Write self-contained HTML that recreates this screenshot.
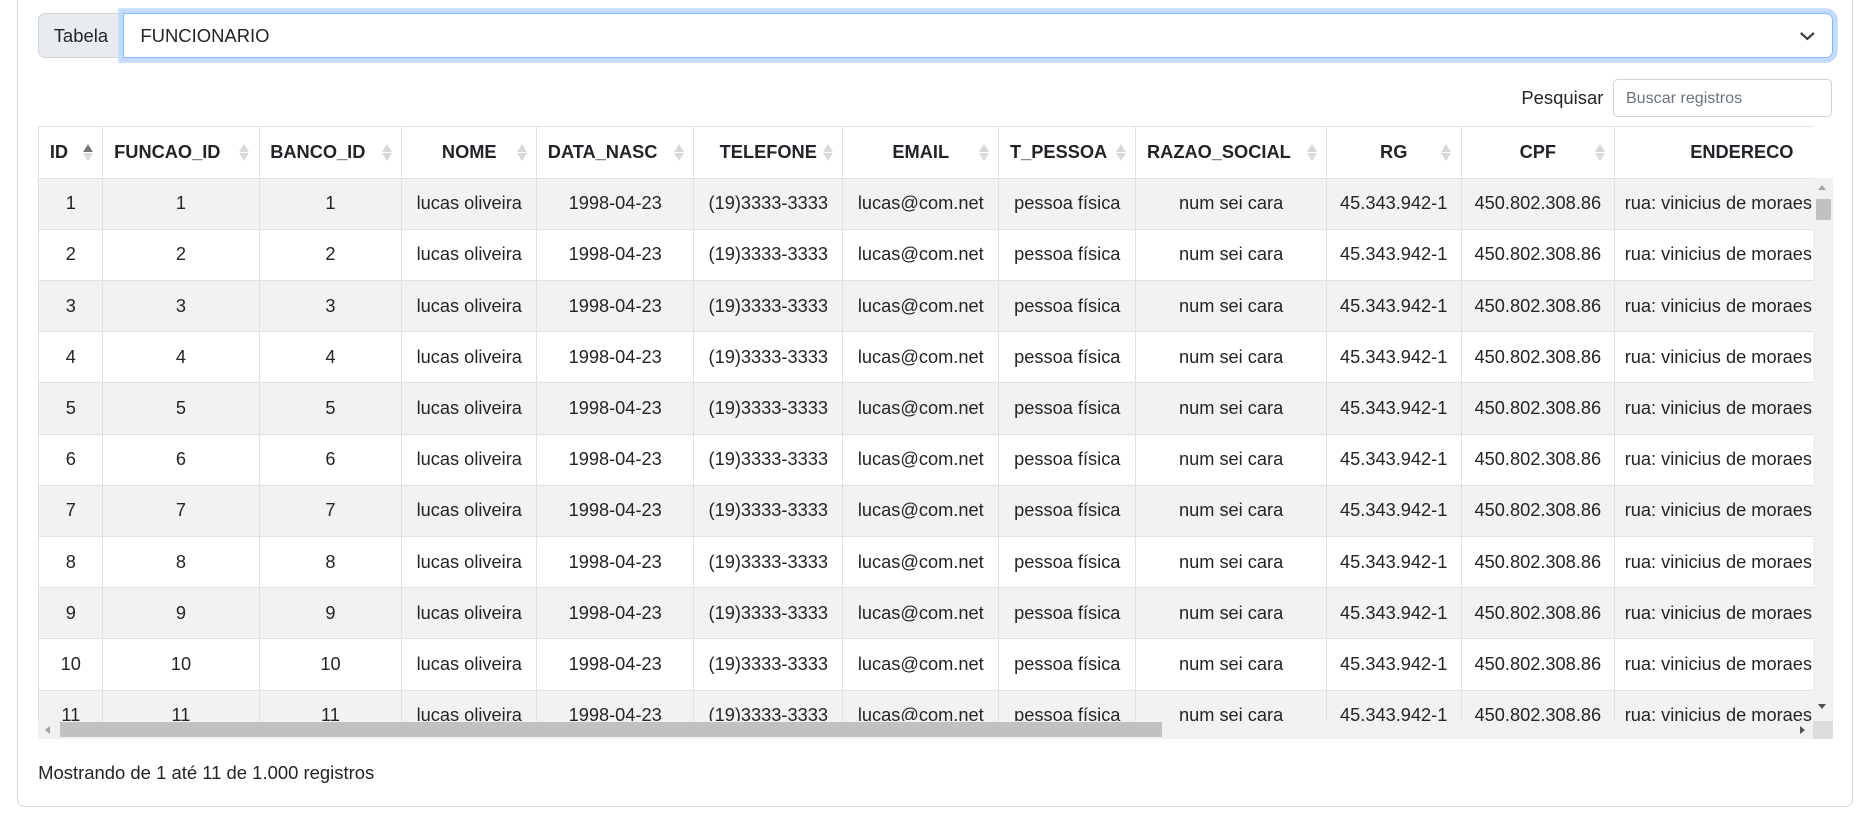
<!DOCTYPE html>
<html><head><meta charset="utf-8">
<style>
html,body{margin:0;padding:0;background:#fff;overflow:hidden;width:1868px;height:824px}
#w{zoom:1.19133;width:1568px;height:692px;position:relative;font-family:"Liberation Sans",sans-serif;color:#212529;font-size:15.3px}
.card{position:absolute;left:14px;top:-20px;width:1541px;height:697px;border:1px solid #d6d8db;border-radius:6px;box-sizing:border-box}
.ig{position:absolute;left:32px;top:11px;width:1507px;height:38px;display:flex}
.lab{width:71px;background:#e9ecef;border:1px solid #ced4da;border-right:none;border-radius:6px 0 0 6px;box-sizing:border-box;display:flex;align-items:center;justify-content:center;font-size:15.5px}
.sel{flex:1;border:1px solid #86b7fe;border-radius:0 6px 6px 0;box-shadow:0 0 0 4px #c2dbfe;box-sizing:border-box;display:flex;align-items:center;padding-left:14px;font-size:15.5px;position:relative}
.sel svg{position:absolute;right:14px;top:13px}
.pq{position:absolute;left:1277px;top:73px;font-size:15.5px}
.si{position:absolute;left:1354px;top:66px;width:184px;height:32px;border:1px solid #ced4da;border-radius:4px;box-sizing:border-box;color:#6c757d;font-size:13.5px;padding:8px 0 0 10px}
.hd,.bd{position:absolute;left:32px;width:1490px;overflow:hidden}
.hd{top:106px;height:43px}
.bd{top:149px;height:456px}
table{border-collapse:collapse;table-layout:fixed;width:1660px}
td,th{border:1px solid #dee2e6;height:43px;padding:0;text-align:center;white-space:nowrap;overflow:hidden;box-sizing:border-box}
th{font-weight:bold;position:relative;font-size:15.3px;border-top:1px solid #dee2e6}
tr.o td{background:#f2f2f2}
td.l{text-align:left;padding-left:8px}
.s{position:absolute;right:7px;top:14px;width:9px;height:16px}
.s:before,.s:after{content:"";position:absolute;left:0;border-left:4.5px solid transparent;border-right:4.5px solid transparent}
.s:before{top:0;border-bottom:7px solid #d8d8d8}
.s:after{top:8px;border-top:7px solid #d8d8d8}
.s.a:before{border-bottom-color:#777}
.vs{position:absolute;left:1522px;top:149px;width:17px;height:456px;background:#f1f1f1}
.vt{position:absolute;left:2px;top:18px;width:13px;height:18px;background:#c1c1c1}
.hs{position:absolute;left:32px;top:605px;width:1490px;height:15px;background:#f1f1f1}
.ht{position:absolute;left:18px;top:1px;width:925px;height:13px;background:#c1c1c1}
.cn{position:absolute;left:1522px;top:605px;width:17px;height:15px;background:#dcdcdc}
.tri{position:absolute;width:0;height:0}
.ft{position:absolute;left:32px;top:640px;font-size:15.5px}
</style></head><body><div id="w">
<div class="card"></div>
<div class="ig"><div class="lab">Tabela</div><div class="sel">FUNCIONARIO<svg width="14" height="10" viewBox="0 0 14 10"><path d="M1.5 2.5 L7 7.5 L12.5 2.5" fill="none" stroke="#343a40" stroke-width="1.8"/></svg></div></div>
<div class="pq">Pesquisar</div>
<div class="si">Buscar registros</div>
<div class="hd"><table>
<colgroup><col style="width:54px"><col style="width:131px"><col style="width:120px"><col style="width:113px"><col style="width:132px"><col style="width:125px"><col style="width:131px"><col style="width:115px"><col style="width:160px"><col style="width:113px"><col style="width:129px"><col style="width:337px"></colgroup>
<tr><th style="text-align:left;padding-left:9px">ID<span class="s a"></span></th><th style="text-align:left;padding-left:9px">FUNCAO_ID<span class="s"></span></th><th style="text-align:left;padding-left:9px">BANCO_ID<span class="s"></span></th><th>NOME<span class="s"></span></th><th style="text-align:left;padding-left:9px">DATA_NASC<span class="s"></span></th><th>TELEFONE<span class="s"></span></th><th>EMAIL<span class="s"></span></th><th style="text-align:left;padding-left:9px">T_PESSOA<span class="s"></span></th><th style="text-align:left;padding-left:9px">RAZAO_SOCIAL<span class="s"></span></th><th>RG<span class="s"></span></th><th>CPF<span class="s"></span></th><th style="text-align:left;padding-left:63px">ENDERECO</th></tr>
</table></div>
<div class="bd"><table>
<colgroup><col style="width:54px"><col style="width:131px"><col style="width:120px"><col style="width:113px"><col style="width:132px"><col style="width:125px"><col style="width:131px"><col style="width:115px"><col style="width:160px"><col style="width:113px"><col style="width:129px"><col style="width:337px"></colgroup>
<tr class="o"><td>1</td><td>1</td><td>1</td><td>lucas oliveira</td><td>1998-04-23</td><td>(19)3333-3333</td><td>lucas@com.net</td><td>pessoa física</td><td>num sei cara</td><td>45.343.942-1</td><td>450.802.308.86</td><td class="l">rua: vinicius de moraes</td></tr>
<tr><td>2</td><td>2</td><td>2</td><td>lucas oliveira</td><td>1998-04-23</td><td>(19)3333-3333</td><td>lucas@com.net</td><td>pessoa física</td><td>num sei cara</td><td>45.343.942-1</td><td>450.802.308.86</td><td class="l">rua: vinicius de moraes</td></tr>
<tr class="o"><td>3</td><td>3</td><td>3</td><td>lucas oliveira</td><td>1998-04-23</td><td>(19)3333-3333</td><td>lucas@com.net</td><td>pessoa física</td><td>num sei cara</td><td>45.343.942-1</td><td>450.802.308.86</td><td class="l">rua: vinicius de moraes</td></tr>
<tr><td>4</td><td>4</td><td>4</td><td>lucas oliveira</td><td>1998-04-23</td><td>(19)3333-3333</td><td>lucas@com.net</td><td>pessoa física</td><td>num sei cara</td><td>45.343.942-1</td><td>450.802.308.86</td><td class="l">rua: vinicius de moraes</td></tr>
<tr class="o"><td>5</td><td>5</td><td>5</td><td>lucas oliveira</td><td>1998-04-23</td><td>(19)3333-3333</td><td>lucas@com.net</td><td>pessoa física</td><td>num sei cara</td><td>45.343.942-1</td><td>450.802.308.86</td><td class="l">rua: vinicius de moraes</td></tr>
<tr><td>6</td><td>6</td><td>6</td><td>lucas oliveira</td><td>1998-04-23</td><td>(19)3333-3333</td><td>lucas@com.net</td><td>pessoa física</td><td>num sei cara</td><td>45.343.942-1</td><td>450.802.308.86</td><td class="l">rua: vinicius de moraes</td></tr>
<tr class="o"><td>7</td><td>7</td><td>7</td><td>lucas oliveira</td><td>1998-04-23</td><td>(19)3333-3333</td><td>lucas@com.net</td><td>pessoa física</td><td>num sei cara</td><td>45.343.942-1</td><td>450.802.308.86</td><td class="l">rua: vinicius de moraes</td></tr>
<tr><td>8</td><td>8</td><td>8</td><td>lucas oliveira</td><td>1998-04-23</td><td>(19)3333-3333</td><td>lucas@com.net</td><td>pessoa física</td><td>num sei cara</td><td>45.343.942-1</td><td>450.802.308.86</td><td class="l">rua: vinicius de moraes</td></tr>
<tr class="o"><td>9</td><td>9</td><td>9</td><td>lucas oliveira</td><td>1998-04-23</td><td>(19)3333-3333</td><td>lucas@com.net</td><td>pessoa física</td><td>num sei cara</td><td>45.343.942-1</td><td>450.802.308.86</td><td class="l">rua: vinicius de moraes</td></tr>
<tr><td>10</td><td>10</td><td>10</td><td>lucas oliveira</td><td>1998-04-23</td><td>(19)3333-3333</td><td>lucas@com.net</td><td>pessoa física</td><td>num sei cara</td><td>45.343.942-1</td><td>450.802.308.86</td><td class="l">rua: vinicius de moraes</td></tr>
<tr class="o"><td>11</td><td>11</td><td>11</td><td>lucas oliveira</td><td>1998-04-23</td><td>(19)3333-3333</td><td>lucas@com.net</td><td>pessoa física</td><td>num sei cara</td><td>45.343.942-1</td><td>450.802.308.86</td><td class="l">rua: vinicius de moraes</td></tr>
</table></div>
<div class="vs"><div class="tri" style="left:4px;top:6px;border-left:4px solid transparent;border-right:4px solid transparent;border-bottom:5px solid #a3a3a3"></div><div class="vt"></div><div class="tri" style="left:4px;top:442px;border-left:4px solid transparent;border-right:4px solid transparent;border-top:5px solid #505050"></div></div>
<div class="hs"><div class="tri" style="left:6px;top:4px;border-top:4px solid transparent;border-bottom:4px solid transparent;border-right:5px solid #a3a3a3"></div><div class="ht"></div><div class="tri" style="left:1479px;top:4px;border-top:4px solid transparent;border-bottom:4px solid transparent;border-left:5px solid #505050"></div></div>
<div class="cn"></div>
<div class="ft">Mostrando de 1 até 11 de 1.000 registros</div>
</div></body></html>
